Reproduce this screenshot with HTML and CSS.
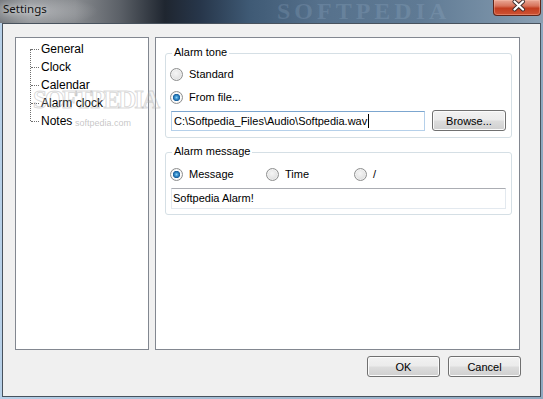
FILE: index.html
```html
<!DOCTYPE html>
<html>
<head>
<meta charset="utf-8">
<title>Settings</title>
<link rel="stylesheet" href="styles.css">
</head>
<body>
<div class="window">
  <div class="titlebar">
    <span class="title">Settings</span>
    <span class="wm-title">SOFTPEDIA</span>
    <div class="close">
      <svg width="47" height="15" viewBox="0 0 47 15">
        <path d="M20.5 1.5 L29 9.5 M29 1.5 L20.5 9.5" stroke="#3b2b2b" stroke-width="4" stroke-linecap="round" fill="none"/>
        <path d="M20.5 1.5 L29 9.5 M29 1.5 L20.5 9.5" stroke="#ffffff" stroke-width="2.2" stroke-linecap="round" fill="none"/>
      </svg>
    </div>
  </div>
  <div class="client">
    <div class="panels">
      <div class="tree">
        <ul class="tree-list">
          <li>General</li>
          <li>Clock</li>
          <li>Calendar</li>
          <li>Alarm clock</li>
          <li>Notes</li>
        </ul>
      </div>
      <div class="page">
        <div class="group tone">
          <span class="legend">Alarm tone</span>
          <div class="opt"><span class="radio"></span>Standard</div>
          <div class="opt second"><span class="radio on"></span>From file...</div>
          <div class="file-row">
            <div class="textbox focus path">C:\Softpedia_Files\Audio\Softpedia.wav<span class="caret"></span></div>
            <div class="btn browse">Browse...</div>
          </div>
        </div>
        <div class="group msg">
          <span class="legend">Alarm message</span>
          <div class="opt-row">
            <div class="opt w-msg"><span class="radio on"></span>Message</div>
            <div class="opt w-time"><span class="radio"></span>Time</div>
            <div class="opt"><span class="radio"></span>/</div>
          </div>
          <div class="textbox message">Softpedia Alarm!</div>
        </div>
      </div>
      <span class="wm-big">SOFTPEDIA</span>
      <span class="wm-small">softpedia.com</span>
    </div>
    <div class="actions">
      <div class="btn action">OK</div>
      <div class="btn action">Cancel</div>
    </div>
  </div>
</div>
</body>
</html>
```
FILE: styles.css
```css
* { box-sizing: border-box; }
html, body { margin: 0; padding: 0; }
body {
  width: 543px;
  height: 399px;
  overflow: hidden;
  font-family: "Liberation Sans", Arial, sans-serif;
  font-size: 11px;
  color: #000;
  background: #a9c0d6;
}
.window {
  width: 543px;
  height: 399px;
  display: flex;
  flex-direction: column;
  background: linear-gradient(90deg, #b7d0e8 0, #a4bdd4 40%, #8fa8bf 100%);
}
.titlebar {
  position: relative;
  height: 23px;
  flex: none;
  padding: 1px 0 0 3px;
  background:
    radial-gradient(ellipse 70px 16px at 28px 11px, rgba(190,192,195,0.75), rgba(190,192,195,0) 100%),
    linear-gradient(90deg, #6a6e73 0, #8d9094 30px, #888b8f 75px, #5b6067 120px, #1f2630 165px, #27364a 200px, #3f5a75 250px, #56718c 320px, #5f7a94 420px, #7991a7 500px, #8ba0b3 543px);
}
.title {
  font-family: "Noto Sans", "Open Sans", sans-serif;
  font-size: 11.5px;
  line-height: 16px;
  color: #141414;
  text-shadow: 0 0 5px rgba(255,255,255,0.6);
}
.wm-title {
  position: absolute;
  left: 277px;
  top: 0;
  line-height: 23px;
  font-family: "Liberation Serif", serif;
  font-weight: bold;
  font-size: 24px;
  letter-spacing: 4px;
  color: rgba(160,185,210,0.22);
}
.close {
  position: absolute;
  right: 2px;
  top: 0;
  width: 48px;
  height: 16px;
  border: 1px solid #5f2418;
  border-top: none;
  border-radius: 0 0 4px 4px;
  background: linear-gradient(#eaa896 0, #d7735b 40%, #c23d1f 55%, #cf5334 100%);
  box-shadow: inset 0 0 0 1px rgba(255,200,180,0.35);
}
.close svg { display: block; }
.client {
  flex: 1;
  margin: 0 2px 2px 2px;
  border: 1px solid #48525d;
  background: #f0f0f0;
  padding: 13px 19px 0 12px;
}
.panels {
  position: relative;
  display: flex;
  gap: 6px;
  height: 313px;
}
.tree {
  width: 134px;
  flex: none;
  border: 1px solid #828790;
  background: #fff;
  padding-top: 2px;
}
.tree-list {
  position: relative;
  list-style: none;
  margin: 0;
  padding: 0 0 0 25px;
}
.tree-list::before {
  content: "";
  position: absolute;
  left: 14px;
  top: 9px;
  bottom: 9px;
  border-left: 1px dotted #6f6f6f;
}
.tree-list li {
  position: relative;
  height: 18px;
  line-height: 18px;
  font-size: 12px;
  white-space: nowrap;
}
.tree-list li::before {
  content: "";
  position: absolute;
  left: -10px;
  top: 9px;
  width: 8px;
  border-top: 1px dotted #6f6f6f;
}
.page {
  width: 365px;
  flex: none;
  border: 1px solid #828790;
  background: #fff;
  padding: 0 0 0 9px;
}
.group {
  position: relative;
  width: 347px;
  border: 1px solid #d5dfe5;
  border-radius: 3px;
  padding-left: 4px;
}
.group.tone {
  margin-top: 15px;
  padding-top: 12px;
  padding-bottom: 6px;
}
.group.msg {
  margin-top: 14px;
  padding-top: 13px;
  padding-bottom: 5px;
}
.legend {
  position: absolute;
  left: 6px;
  top: -9px;
  padding: 0 2px;
  line-height: 14px;
  background: #fff;
}
.opt {
  display: flex;
  align-items: center;
  gap: 6px;
  height: 16px;
  white-space: nowrap;
}
.opt.second { margin-top: 7px; }
.opt-row { display: flex; }
.w-msg { width: 96px; }
.w-time { width: 88px; }
.radio {
  width: 13px;
  height: 13px;
  flex: none;
  border: 1px solid #8e8f8f;
  border-radius: 50%;
  background: radial-gradient(circle at 45% 40%, #f6f6f6 0, #e4e4e4 55%, #cdcdcd 100%);
  box-shadow: inset 0 0 0 1px rgba(255,255,255,0.5);
}
.radio.on {
  background: radial-gradient(circle at 50% 50%, #8fd3f5 0, #3a93d0 1.6px, #175c99 3.4px, #ffffff 3.9px, #f3f3f3 4.6px, #d0d0d0 100%);
}
.file-row {
  display: flex;
  align-items: flex-start;
  margin-top: 5px;
}
.textbox {
  height: 20px;
  line-height: 18px;
  border: 1px solid #e3e9ef;
  border-top-color: #abadb3;
  background: #fff;
  white-space: nowrap;
  overflow: hidden;
}
.textbox.path {
  width: 254px;
  margin: 1px 0 0 1px;
  padding-left: 2px;
}
.textbox.focus {
  border-color: #b5d0ea;
  border-top-color: #7ca6cf;
}
.caret {
  display: inline-block;
  width: 1px;
  height: 14px;
  margin-left: 1px;
  background: #000;
  vertical-align: -3px;
}
.textbox.message {
  width: 335px;
  height: 21px;
  line-height: 19px;
  margin: 6px 0 0 1px;
  padding-left: 1px;
}
.btn {
  height: 21px;
  border: 1px solid #707070;
  border-radius: 3px;
  background: linear-gradient(#f2f2f2 0, #ebebeb 48%, #dddddd 52%, #cfcfcf 100%);
  box-shadow: inset 0 0 0 1px #fbfbfb;
  display: flex;
  align-items: center;
  justify-content: center;
  white-space: nowrap;
}
.btn.browse {
  width: 74px;
  margin-left: 7px;
}
.actions {
  display: flex;
  justify-content: flex-end;
  gap: 8px;
  margin-top: 6px;
}
.btn.action { width: 73px; }
.wm-big {
  position: absolute;
  left: 18px;
  top: 55px;
  line-height: 16px;
  font-family: "Liberation Serif", serif;
  font-weight: bold;
  font-size: 25px;
  letter-spacing: -2px;
  color: rgba(255,255,255,0.15);
  -webkit-text-stroke: 1px rgba(160,160,160,0.4);
}
.wm-small {
  position: absolute;
  left: 60px;
  top: 80px;
  line-height: 12px;
  font-size: 9px;
  color: rgba(150,150,150,0.55);
}
```
